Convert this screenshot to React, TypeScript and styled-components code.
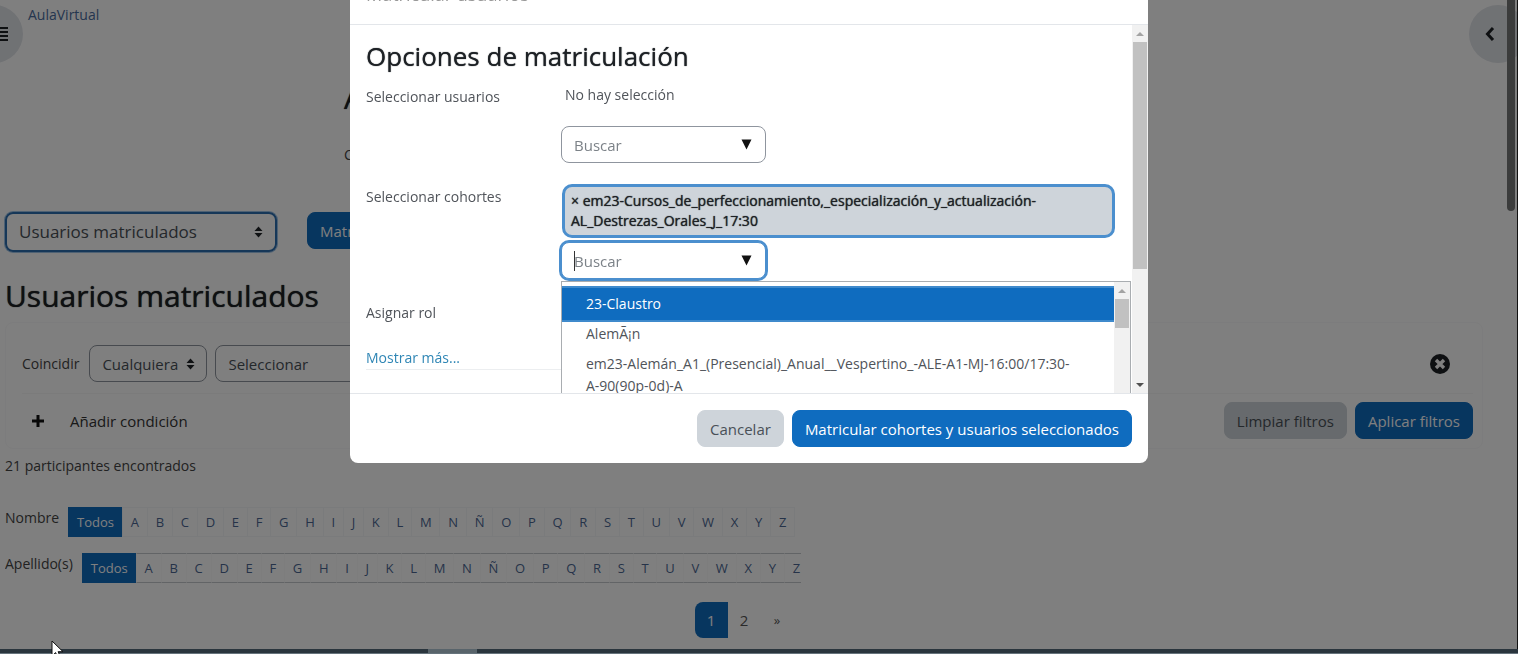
import React from "react";
import styled, { createGlobalStyle, css } from "styled-components";

const Global = createGlobalStyle`
  *, *::before, *::after { box-sizing: border-box; }
  body {
    margin: 0;
    background: #fff;
    color: #444;
    font-family: "Open Sans", "Noto Sans", sans-serif;
    font-size: 14px;
    line-height: 22px;
    overflow: hidden;
  }
  h1, h2, h3, p, ul { margin: 0; padding: 0; }
  h1, h2, h3 { color: #1d2125; font-weight: 500; text-shadow: 0 0 1px currentColor; }
  button, input, select { font: inherit; font-size: 15px; }
  a { text-decoration: none; }
`;

const Page = styled.div`
  position: relative;
  display: flex;
  flex-direction: column;
  min-height: 100vh;
  overflow: hidden;
`;

const TopBar = styled.nav`
  height: 32px;
  padding: 4px 28px;
`;

const BrandLink = styled.a`
  color: #4a6c9e;
`;

const DrawerToggle = styled.button<{ $side: "left" | "right" }>`
  position: absolute;
  top: 5px;
  ${(p) => (p.$side === "left" ? "left: -35px;" : "right: -9px;")}
  width: 58px;
  height: 58px;
  padding: 0;
  border: 0;
  border-radius: 50%;
  background: #e1e4e9;
  color: #1d2125;
  display: flex;
  align-items: center;
  justify-content: ${(p) => (p.$side === "left" ? "flex-end" : "flex-start")};
  ${(p) => (p.$side === "left" ? "padding-right: 15px;" : "padding-left: 16px;")}
`;

const CourseHeader = styled.header`
  display: flex;
  flex-direction: column;
  gap: 26px;
  padding: 46px 344px 46px;
`;

const CourseTitle = styled.h1`
  font-size: 30px;
  line-height: 40px;
`;

const Main = styled.main`
  flex: 1;
  display: flex;
  flex-direction: column;
  padding: 0 35px 0 5px;
`;

const Toolbar = styled.div`
  display: flex;
  align-items: flex-start;
  gap: 30px;
`;

const SelectWrap = styled.span<{ $large?: boolean; $width: number }>`
  display: inline-flex;
  align-items: center;
  width: ${(p) => p.$width}px;
  color: #212529;

  select {
    appearance: none;
    width: 100%;
    height: ${(p) => (p.$large ? 40 : 37)}px;
    padding: 0 12px;
    border: 1px solid #8f959e;
    border-radius: 8px;
    background: transparent;
    color: #495057;
    ${(p) =>
      p.$large &&
      css`
        border: 2px solid #2c6eb0;
        box-shadow: 0 0 0 1px #9cc3e6;
        font-size: 17px;
      `}
  }
  svg {
    flex: none;
    margin-left: ${(p) => (p.$large ? -23 : -21)}px;
    pointer-events: none;
  }
`;

const Button = styled.button<{ $variant?: "primary" | "secondary" }>`
  height: 37px;
  padding: 0 12px;
  border: 1px solid ${(p) => (p.$variant === "secondary" ? "#ced4da" : "#0f6cbf")};
  border-radius: 8px;
  background: ${(p) => (p.$variant === "secondary" ? "#ced4da" : "#0f6cbf")};
  color: ${(p) => (p.$variant === "secondary" ? "#495057" : "#fff")};
  white-space: nowrap;
`;

const PageTitle = styled.h2`
  margin: 24px 0 6px;
  font-size: 30px;
  line-height: 40px;
`;

const FilterPanel = styled.section`
  border: 1px solid #f9f9fa;
  border-radius: 8px;
  padding: 22px 9px 9px 16px;
`;

const FilterRow = styled.div`
  display: flex;
  align-items: center;
  gap: 8px;
  padding-bottom: 11px;
  border-bottom: 1px solid #f6f6f6;

  label { padding-right: 2px; }
`;

const IconButton = styled.button`
  display: flex;
  padding: 0;
  border: 0;
  background: none;
  color: #1d2125;
`;

const RemoveButton = styled(IconButton)`
  margin: 0 23px 0 auto;
`;

const AddCondition = styled(IconButton)`
  align-items: center;
  gap: 26px;
  margin: 0 auto 0 10px;
  color: #333;
`;

const ActionRow = styled.div`
  display: flex;
  align-items: center;
  gap: 8px;
  padding-top: 8px;
`;

const Count = styled.p`
  margin-top: 6px;
`;

const InitialsGroup = styled.div`
  display: flex;
  flex-direction: column;
  gap: 16px;
  padding-top: 30px;
`;

const InitialsRow = styled.nav`
  display: flex;
  align-items: flex-start;
  gap: 9px;
  max-width: 796px;
  overflow: hidden;
`;

const Initials = styled.ul<{ $ruled?: boolean }>`
  display: flex;
  flex: none;
  width: 727px;
  list-style: none;
  font-size: 13px;
  line-height: 20px;

  li + li { flex: 1 0 auto; }
  a {
    display: block;
    padding: 4px 6px;
    margin-left: -1px;
    border: 1px solid #f5f6f8;
    color: #4c6793;
    text-align: center;
    ${(p) => p.$ruled && "border-color: #c4c8cc #fbfbfb;"}
  }
  li:first-child a {
    margin-left: 0;
    padding: 4px 8px;
    border-color: #0f6cbf;
    background: #0f6cbf;
    color: #fff;
  }
`;

const Pages = styled.ul`
  display: flex;
  align-items: center;
  align-self: center;
  list-style: none;
  margin-top: 19px;
  font-size: 15px;

  a {
    display: block;
    min-width: 33px;
    padding: 7px 0;
    text-align: center;
    color: #555;
  }
  li:first-child a {
    border-radius: 8px 0 0 8px;
    background: #0f6cbf;
    color: #fff;
  }
  li:last-child a { font-size: 13px; }
`;

const Backdrop = styled.div`
  position: fixed;
  inset: 0;
  background: rgba(0, 0, 0, 0.5);
`;

const Overlay = styled.div`
  position: fixed;
  inset: 0 20px 0 0;
  display: flex;
  align-items: flex-start;
  justify-content: center;
`;

const Dialog = styled.div`
  display: flex;
  flex-direction: column;
  width: 100%;
  max-width: 798px;
  margin-top: -34px;
  border-radius: 8px;
  background: #fff;
  overflow: hidden;
`;

const DialogHeader = styled.header`
  padding: 16px 16px 18px;
  border-bottom: 1px solid #e3e6ea;

  h2 {
    font-size: 18px;
    line-height: 24px;
    font-weight: 400;
    color: #999;
    text-shadow: none;
  }
`;

const DialogBody = styled.div`
  display: grid;
  grid-template-columns: 1fr 16px;
  height: calc(100vh - 286px);
  overflow: hidden;
`;

const Form = styled.form`
  min-width: 0;
  overflow: hidden;
  padding: 13px 2px 16px 16px;
  color: #50545a;
`;

const FormTitle = styled.h3`
  font-size: 26px;
  line-height: 36px;
  margin-bottom: 10px;
`;

const Field = styled.div`
  display: grid;
  grid-template-columns: 195px 1fr;
  align-items: start;
  margin-bottom: 21px;

  > label, > span { padding-top: 2px; }
`;

const FieldControl = styled.div`
  position: relative;
  min-width: 0;
`;

const EmptySelection = styled.p`
  margin: 0 0 20px 4px;
`;

const Chip = styled.button`
  display: block;
  width: calc(100% - 16px);
  margin: 0 0 4px 1px;
  padding: 4px 6px;
  border: 3px solid #4b8fce;
  border-radius: 10px;
  background: #ced4da;
  color: #1d2125;
  font-size: 14px;
  font-weight: 500;
  line-height: 20px;
  text-align: left;
  text-shadow: 0 0 1px currentColor;
`;

const Search = styled.span<{ $focus?: boolean }>`
  position: relative;
  display: flex;
  align-items: center;
  width: 205px;

  input {
    width: 100%;
    height: 37px;
    padding: 0 12px;
    border: 1px solid ${(p) => (p.$focus ? "#4b8fce" : "#8f959e")};
    border-radius: 8px;
    outline: 0;
    background: #fff;
    ${(p) => p.$focus && "box-shadow: 0 0 0 2px #4b8fce;"}
  }
  input::placeholder { color: #7c8288; opacity: 1; }
  svg { flex: none; margin-left: -25px; color: #111; }
`;

const Caret = styled.i`
  position: absolute;
  left: 13px;
  top: 9px;
  width: 1px;
  height: 20px;
  background: #333;
`;

const Suggestions = styled.div`
  position: absolute;
  top: calc(100% + 2px);
  left: 0;
  z-index: 1;
  display: grid;
  grid-template-columns: 1fr 16px;
  width: 570px;
  height: 300px;
  border: 1px solid #a9adb1;
  background: #fff;
`;

const Options = styled.ul`
  list-style: none;
  padding: 7px 0;
  overflow: hidden;
`;

const Option = styled.li<{ $active?: boolean }>`
  padding: 4px 32px 4px 24px;
  ${(p) =>
    p.$active &&
    css`
      background: #0f6cbf;
      box-shadow: 0 0 0 1px #0f6cbf, 0 0 0 3px #3f8acc;
      color: #fff;
    `}
`;

const ScrollTrack = styled.div`
  display: flex;
  flex-direction: column;
  align-items: center;
  justify-content: space-between;
  background: #f1f1f1;
`;

const ThumbArea = styled.div`
  flex: 1;
  width: 14px;
`;

const Thumb = styled.div<{ $share: string }>`
  height: ${(p) => p.$share};
  background: #c1c1c1;
`;

const Rule = styled.hr`
  margin: 0 16px 40px 0;
  border: 0;
  border-top: 1px solid #eceef0;
`;

const MoreLink = styled.a`
  display: block;
  padding-top: 2px;
  color: #2f86b5;
`;

const DialogFooter = styled.footer`
  display: flex;
  justify-content: flex-end;
  gap: 8px;
  padding: 16px;
  border-top: 1px solid #e3e6ea;
`;

const WindowScroll = styled.div`
  position: absolute;
  top: 0;
  right: 3px;
  width: 8px;
  height: 211px;
  border-radius: 0 0 4px 4px;
  background: #3b3c3c;
`;

const WindowEdge = styled.div`
  position: absolute;
  inset: 0 0 0 auto;
  width: 1px;
  background: #111;
`;

const Taskbar = styled.div`
  position: fixed;
  inset: auto 0 0 0;
  height: 5px;
  padding-left: 428px;
  border-bottom: 1px solid #66737c;
  background: #2a353d;
`;

const TaskbarItem = styled.div`
  width: 49px;
  height: 4px;
  background: #59646b;
`;

const Pointer = styled.svg`
  position: fixed;
  left: 51px;
  bottom: -6px;
`;

const SortIcon = () => (
  <svg width="9" height="12" viewBox="0 0 9 12" fill="currentColor" aria-hidden="true">
    <path d="M4.5 0.5 8.5 5h-8zM4.5 11.5 0.5 7h8z" />
  </svg>
);

const DownIcon = () => (
  <svg width="11" height="11" viewBox="0 0 11 11" fill="currentColor" aria-hidden="true">
    <path d="M0.5 0.5h10L5.5 10.5z" />
  </svg>
);

const Arrow = ({ down }: { down?: boolean }) => (
  <svg width="16" height="17" viewBox="0 0 16 17" fill={down ? "#505050" : "#a3a3a3"} aria-hidden="true">
    <path d={down ? "M4 7h8L8 11z" : "M4 11h8L8 7z"} />
  </svg>
);

const LETTERS = "ABCDEFGHIJKLMNÑOPQRSTUVWXYZ".split("");

const InitialsBar = ({ label, ruled }: { label: string; ruled?: boolean }) => (
  <InitialsRow aria-label={label}>
    <span>{label}</span>
    <Initials $ruled={ruled}>
      {["Todos", ...LETTERS].map((l) => (
        <li key={l}>
          <a href="#">{l}</a>
        </li>
      ))}
    </Initials>
  </InitialsRow>
);

const SearchBox = ({ id, focus }: { id: string; focus?: boolean }) => (
  <Search $focus={focus}>
    <input id={id} type="text" placeholder="Buscar" />
    {focus && <Caret />}
    <DownIcon />
  </Search>
);

export default function App() {
  return (
    <>
      <Global />
      <Page>
        <TopBar>
          <BrandLink href="#">AulaVirtual</BrandLink>
        </TopBar>
        <DrawerToggle $side="left" aria-label="Abrir índice">
          <svg width="12" height="14" viewBox="0 0 12 14" fill="currentColor">
            <path d="M0 0h12v2H0zM0 4h12v2H0zM0 8h12v2H0zM0 12h12v2H0z" />
          </svg>
        </DrawerToggle>
        <DrawerToggle $side="right" aria-label="Abrir bloques">
          <svg width="10" height="14" viewBox="0 0 10 14" fill="none" stroke="currentColor" strokeWidth="3">
            <path d="M8 1 2.500 7 8 13" />
          </svg>
        </DrawerToggle>
        <CourseHeader>
          <CourseTitle>A</CourseTitle>
          <p>C</p>
        </CourseHeader>
        <Main>
          <Toolbar>
            <SelectWrap $large $width={272}>
              <select aria-label="Navegación de participantes">
                <option>Usuarios matriculados</option>
              </select>
              <SortIcon />
            </SelectWrap>
            <Button>Matricular usuarios</Button>
          </Toolbar>
          <PageTitle>Usuarios matriculados</PageTitle>
          <FilterPanel>
            <FilterRow>
              <label htmlFor="match">Coincidir</label>
              <SelectWrap $width={118}>
                <select id="match">
                  <option>Cualquiera</option>
                </select>
                <SortIcon />
              </SelectWrap>
              <SelectWrap $width={180}>
                <select aria-label="Tipo de filtro">
                  <option>Seleccionar</option>
                </select>
                <SortIcon />
              </SelectWrap>
              <RemoveButton aria-label="Quitar condición">
                <svg width="20" height="20" viewBox="0 0 20 20">
                  <circle cx="10" cy="10" r="10" fill="currentColor" />
                  <path d="m6 6 8 8m0-8-8 8" stroke="#fff" strokeWidth="3.4" />
                </svg>
              </RemoveButton>
            </FilterRow>
            <ActionRow>
              <AddCondition>
                <svg width="12" height="12" viewBox="0 0 12 12" fill="#111">
                  <path d="M4.5 0h3v4.5H12v3H7.500V12h-3V7.500H0v-3h4.500z" />
                </svg>
                Añadir condición
              </AddCondition>
              <Button $variant="secondary">Limpiar filtros</Button>
              <Button>Aplicar filtros</Button>
            </ActionRow>
          </FilterPanel>
          <Count>21 participantes encontrados</Count>
          <InitialsGroup>
            <InitialsBar label="Nombre" />
            <InitialsBar label="Apellido(s)" ruled />
          </InitialsGroup>
          <Pages>
            <li><a href="#">1</a></li>
            <li><a href="#">2</a></li>
            <li><a href="#">»</a></li>
          </Pages>
        </Main>
      </Page>
      <Backdrop />
      <WindowScroll />
      <WindowEdge />
      <Overlay>
        <Dialog role="dialog" aria-labelledby="dialog-title">
          <DialogHeader>
            <h2 id="dialog-title">Matricular usuarios</h2>
          </DialogHeader>
          <DialogBody>
            <Form>
              <FormTitle>Opciones de matriculación</FormTitle>
              <Field>
                <label htmlFor="users">Seleccionar usuarios</label>
                <FieldControl>
                  <EmptySelection>No hay selección</EmptySelection>
                  <SearchBox id="users" />
                </FieldControl>
              </Field>
              <Field>
                <label htmlFor="cohorts">Seleccionar cohortes</label>
                <FieldControl>
                  <Chip type="button">
                    × em23-Cursos_de_perfeccionamiento,_especialización_y_actualización-
                    AL_Destrezas_Orales_J_17:30
                  </Chip>
                  <SearchBox id="cohorts" focus />
                  <Suggestions>
                    <Options>
                      <Option $active>23-Claustro</Option>
                      <Option>AlemÃ¡n</Option>
                      <Option>
                        em23-Alemán_A1_(Presencial)_Anual__Vespertino_-ALE-A1-MJ-16:00/17:30-
                        A-90(90p-0d)-A
                      </Option>
                    </Options>
                    <ScrollTrack>
                      <Arrow />
                      <ThumbArea>
                        <Thumb $share="29px" />
                      </ThumbArea>
                    </ScrollTrack>
                  </Suggestions>
                </FieldControl>
              </Field>
              <Field>
                <span>Asignar rol</span>
              </Field>
              <MoreLink href="#">Mostrar más...</MoreLink>
              <Rule />
            </Form>
            <ScrollTrack>
              <Arrow />
              <ThumbArea>
                <Thumb $share="68%" />
              </ThumbArea>
              <Arrow down />
            </ScrollTrack>
          </DialogBody>
          <DialogFooter>
            <Button $variant="secondary">Cancelar</Button>
            <Button>Matricular cohortes y usuarios seleccionados</Button>
          </DialogFooter>
        </Dialog>
      </Overlay>
      <Taskbar>
        <TaskbarItem />
      </Taskbar>
      <Pointer width="13" height="20" viewBox="0 0 13 20" aria-hidden="true">
        <path d="M1 1v15l3.600-3.400L7 18l2.500-1-2.400-5.300H12z" fill="#fff" stroke="#111" />
      </Pointer>
    </>
  );
}
